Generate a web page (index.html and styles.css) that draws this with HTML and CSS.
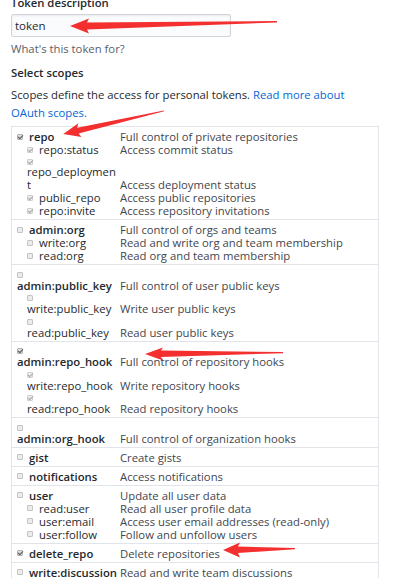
FILE: index.html
```html
<!DOCTYPE html>
<html lang="en">

<head>
    <meta charset="UTF-8">
    <meta name="viewport" content="width=device-width, initial-scale=1.0">
    <link rel="stylesheet" href="styles.css">
    <title>New personal access token</title>
</head>

<body>

    <div class="page">
        <label class="fieldLabel" for="desc">Token description</label>
        <input class="field" id="desc" type="text" value="token">
        <p class="note">What's this token for?</p>

        <h3 class="title">Select scopes</h3>
        <p class="lead">Scopes define the access for personal tokens. <a href="#">Read more about OAuth scopes.</a></p>

        <div class="scopes">
            <div class="group">
                <div class="scope">
                    <div class="name"><span class="cb on"></span>repo</div>
                    <div class="desc">Full control of private repositories</div>
                </div>
                <div class="scope sub">
                    <div class="name"><span class="cb on"></span>repo:status</div>
                    <div class="desc">Access commit status</div>
                </div>
                <div class="scope sub">
                    <div class="name stack tight"><span class="cb on"></span><span>repo_deploymen<br>t</span></div>
                    <div class="desc">Access deployment status</div>
                </div>
                <div class="scope sub">
                    <div class="name"><span class="cb on"></span>public_repo</div>
                    <div class="desc">Access public repositories</div>
                </div>
                <div class="scope sub">
                    <div class="name"><span class="cb on"></span>repo:invite</div>
                    <div class="desc">Access repository invitations</div>
                </div>
            </div>

            <div class="group">
                <div class="scope">
                    <div class="name"><span class="cb"></span>admin:org</div>
                    <div class="desc">Full control of orgs and teams</div>
                </div>
                <div class="scope sub">
                    <div class="name"><span class="cb"></span>write:org</div>
                    <div class="desc">Read and write org and team membership</div>
                </div>
                <div class="scope sub">
                    <div class="name"><span class="cb"></span>read:org</div>
                    <div class="desc">Read org and team membership</div>
                </div>
            </div>

            <div class="group">
                <div class="scope">
                    <div class="name stack"><span class="cb"></span><span>admin:public_key</span></div>
                    <div class="desc">Full control of user public keys</div>
                </div>
                <div class="scope sub">
                    <div class="name stack"><span class="cb"></span><span>write:public_key</span></div>
                    <div class="desc">Write user public keys</div>
                </div>
                <div class="scope sub">
                    <div class="name stack"><span class="cb"></span><span>read:public_key</span></div>
                    <div class="desc">Read user public keys</div>
                </div>
            </div>

            <div class="group">
                <div class="scope">
                    <div class="name stack"><span class="cb on"></span><span>admin:repo_hook</span></div>
                    <div class="desc">Full control of repository hooks</div>
                </div>
                <div class="scope sub">
                    <div class="name stack"><span class="cb on"></span><span>write:repo_hook</span></div>
                    <div class="desc">Write repository hooks</div>
                </div>
                <div class="scope sub">
                    <div class="name stack"><span class="cb on"></span><span>read:repo_hook</span></div>
                    <div class="desc">Read repository hooks</div>
                </div>
            </div>

            <div class="group">
                <div class="scope">
                    <div class="name stack"><span class="cb"></span><span>admin:org_hook</span></div>
                    <div class="desc">Full control of organization hooks</div>
                </div>
            </div>

            <div class="group">
                <div class="scope">
                    <div class="name"><span class="cb"></span>gist</div>
                    <div class="desc">Create gists</div>
                </div>
            </div>

            <div class="group">
                <div class="scope">
                    <div class="name"><span class="cb"></span>notifications</div>
                    <div class="desc">Access notifications</div>
                </div>
            </div>

            <div class="group">
                <div class="scope">
                    <div class="name"><span class="cb"></span>user</div>
                    <div class="desc">Update all user data</div>
                </div>
                <div class="scope sub">
                    <div class="name"><span class="cb"></span>read:user</div>
                    <div class="desc">Read all user profile data</div>
                </div>
                <div class="scope sub">
                    <div class="name"><span class="cb"></span>user:email</div>
                    <div class="desc">Access user email addresses (read-only)</div>
                </div>
                <div class="scope sub">
                    <div class="name"><span class="cb"></span>user:follow</div>
                    <div class="desc">Follow and unfollow users</div>
                </div>
            </div>

            <div class="group">
                <div class="scope">
                    <div class="name"><span class="cb on"></span>delete_repo</div>
                    <div class="desc">Delete repositories</div>
                </div>
            </div>

            <div class="group">
                <div class="scope">
                    <div class="name"><span class="cb"></span>write:discussion</div>
                    <div class="desc">Read and write team discussions</div>
                </div>
            </div>
        </div>
    </div>

    <!-- red arrows drawn over the screenshot -->
    <svg class="marks" width="393" height="578" viewBox="0 0 393 578">
        <polygon points="70,26 89,18.5 87,22.5 277,21 277,22.5 87,29.5 89,33.5" />
        <polygon points="63.3,134 78.3,123.3 77.2,127.7 163.9,110.4 164.1,111.3 78.6,133.5 81.5,136.9" />
        <polygon points="145,354 163,347.5 161,350.5 283,352 283,353.2 161,357 163,360.5" />
        <polygon points="223,550 240,542.5 238,546.5 295,548 295,549.2 238,553 240,557.5" />
    </svg>

</body>

</html>
```

FILE: styles.css
```css
* {
    margin: 0;
    padding: 0;
    box-sizing: border-box;
}

body {
    position: relative;
    background-color: #fff;
    color: #24292e;
    font-family: "Open Sans", "Noto Sans", sans-serif;
    font-size: 11.3px;
    line-height: 18px;
    overflow: hidden;
}

.page {
    width: 368px;
    margin: -6px 0 0 11px;
}

.fieldLabel {
    display: block;
    font-weight: 600;
}

.field {
    display: block;
    width: 220px;
    height: 23px;
    margin-top: 2px;
    padding: 0 3px;
    border: 1px solid #d1d5da;
    border-radius: 2px;
    background-color: #fafbfc;
    box-shadow: inset 0 1px 2px rgba(27, 31, 35, 0.075);
    font-family: "Open Sans", "Noto Sans", sans-serif;
    font-size: 11.5px;
    color: #24292e;
}

.note {
    margin-top: 3px;
    color: #586069;
}

.title {
    margin-top: 6px;
    font-size: 11.3px;
    font-weight: 600;
}

.lead {
    width: 360px;
    margin-top: 4px;
}

.lead a {
    color: #0366d6;
    text-decoration: none;
}

.scopes {
    margin-top: 4px;
    border: 1px solid #e1e4e8;
    border-top-width: 0;
}

.group {
    padding: 3px 0 2px;
    border-top: 1px solid #e1e4e8;
}

.scope {
    display: flex;
    align-items: flex-end;
    padding-left: 5px;
    line-height: 13px;
}

.scope.sub {
    padding-left: 15px;
}

.name {
    display: flex;
    align-items: center;
    flex-shrink: 0;
    width: 103px;
    font-weight: 600;
    color: #24292e;
    white-space: nowrap;
}

.sub .name {
    width: 93px;
    font-weight: 400;
}

.name.stack {
    flex-direction: column;
    align-items: flex-start;
}

.desc {
    color: #3f464e;
    white-space: nowrap;
}

.cb {
    position: relative;
    display: inline-block;
    flex-shrink: 0;
    width: 6px;
    height: 6px;
    margin-right: 6px;
    border: 1px solid #c3c3c3;
    border-radius: 1px;
    background-color: #ececec;
}

.stack .cb {
    margin: 3.5px 0 1px;
}

.stack.tight .cb {
    margin: 2.5px 0 0.5px;
}

.cb.on {
    background-color: #dedede;
    border-color: #b5b5b5;
}

.cb.on::after {
    content: "";
    position: absolute;
    left: 1px;
    top: -1px;
    width: 2px;
    height: 4px;
    border: solid #555;
    border-width: 0 1px 1px 0;
    transform: rotate(45deg);
}

.sub .cb.on {
    background-color: #eee;
    border-color: #cfcfcf;
}

.sub .cb.on::after {
    border-color: #a8a8a8;
}

.marks {
    position: absolute;
    left: 0;
    top: 0;
    pointer-events: none;
}

.marks polygon {
    fill: #f42f2f;
}
```
